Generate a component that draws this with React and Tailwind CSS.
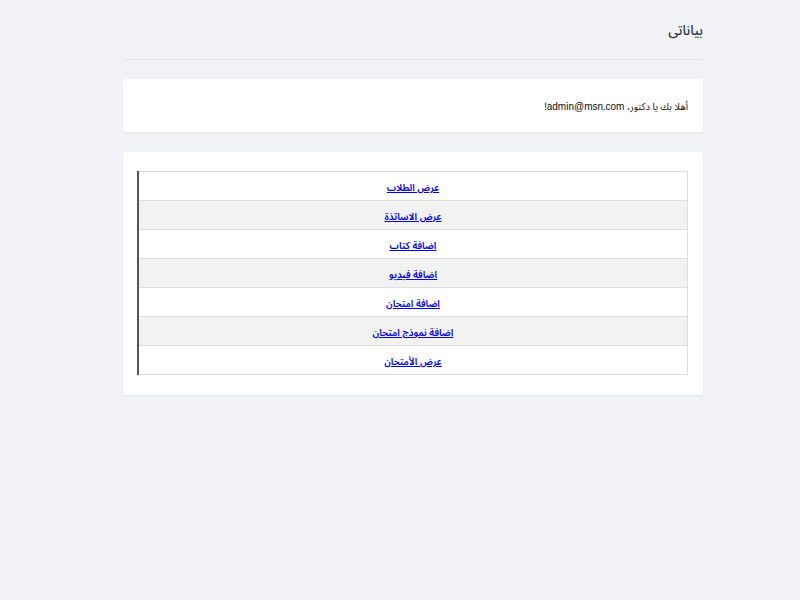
import React from "react";

export default function App() {
  const links = [
    "عرض الطلاب",
    "عرض الاساتذة",
    "اضافة كتاب",
    "اضافة فيديو",
    "اضافة امتحان",
    "اضافة نموذج امتحان",
    "عرض الأمتحان",
  ];

  return (
    <div dir="rtl" className="min-h-[600px] w-full bg-[#f1f2f6] font-['Liberation_Sans_Narrow','Noto_Sans_Arabic_UI',sans-serif] font-stretch-condensed">
      <div className="mr-[97px] w-[580px] pt-[19px]">
        {/* Header */}
        <div className="border-b border-[#e2e4e8] pb-[18px]">
          <h1 className="text-[14px] leading-[22px] font-medium text-[#2d3748]">بياناتى</h1>
        </div>

        {/* Welcome card */}
        <div className="mt-[19px] h-[53px] rounded-[2px] bg-white px-[15px] pt-[18px] shadow-[0_1px_2px_rgba(0,0,0,0.06)]">
          <p className="text-[10px] leading-[18px] text-[#111]">
            أهلا بك يا دكتور، admin@msn.com!
          </p>
        </div>

        {/* Links card */}
        <div className="mt-[20px] rounded-[2px] bg-white pb-[20px] pl-[14px] pr-[15px] pt-[19px] shadow-[0_1px_2px_rgba(0,0,0,0.06)]">
          <table className="w-full border-collapse border border-[#dedede] border-l-2 border-l-[#555]">
            <tbody>
              {links.map((label, i) => (
                <tr
                  key={label}
                  className={i % 2 === 1 ? "bg-[#f2f2f2]" : "bg-white"}
                >
                  <td className="h-[29px] border-t border-[#dedede] p-0 pb-[3px] text-center align-middle">
                    <a
                      href="#"
                      className="text-[10px] font-semibold text-[#0000ee] underline"
                    >
                      {label}
                    </a>
                  </td>
                </tr>
              ))}
            </tbody>
          </table>
        </div>
      </div>
    </div>
  );
}
